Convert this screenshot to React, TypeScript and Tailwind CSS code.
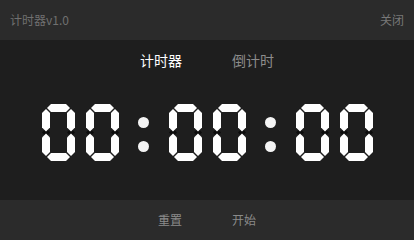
import { useEffect, useState } from 'react';

// 7-segment layout: a top, b top-right, c bottom-right, d bottom, e bottom-left, f top-left, g middle
const SEGMENTS: Record<string, string> = {
  '0': 'abcdef',
  '1': 'bc',
  '2': 'abdeg',
  '3': 'abcdg',
  '4': 'bcfg',
  '5': 'acdfg',
  '6': 'acdefg',
  '7': 'abc',
  '8': 'abcdefg',
  '9': 'abcdfg',
};

const W = 33;
const H = 57;
const T = 8;
const G = 1;

function hSeg(x0: number, x1: number, c: number) {
  const h = T / 2;
  return `${x0},${c} ${x0 + h},${c - h} ${x1 - h},${c - h} ${x1},${c} ${x1 - h},${c + h} ${x0 + h},${c + h}`;
}

function vSeg(y0: number, y1: number, v: number) {
  const h = T / 2;
  return `${v},${y0} ${v + h},${y0 + h} ${v + h},${y1 - h} ${v},${y1} ${v - h},${y1 - h} ${v - h},${y0 + h}`;
}

function diamond(x: number, y: number) {
  const h = T / 2;
  return `${x - h},${y} ${x},${y - h} ${x + h},${y} ${x},${y + h}`;
}

const L = T / 2;
const R = W - T / 2;
const TOP = T / 2;
const MID = H / 2;
const BOT = H - T / 2;

const SHAPES: Record<string, string> = {
  a: hSeg(L + G, R - G, TOP),
  b: vSeg(TOP + G, MID - G, R),
  c: vSeg(MID + G, BOT - G, R),
  d: hSeg(L + G, R - G, BOT),
  e: vSeg(MID + G, BOT - G, L),
  f: vSeg(TOP + G, MID - G, L),
  g: hSeg(L + G, R - G, MID),
};

function Digit({ value }: { value: string }) {
  const lit = SEGMENTS[value] ?? '';
  const order = ['a', 'b', 'c', 'd', 'e', 'f', 'g'];
  return (
    <svg width={W} height={H} viewBox={`0 0 ${W} ${H}`} className="block">
      {/* dark joints where the side segments meet */}
      <polygon points={diamond(L, MID)} fill="#0c0c0c" />
      <polygon points={diamond(R, MID)} fill="#0c0c0c" />
      {order
        .filter((s) => lit.includes(s))
        .map((s) => (
          <polygon key={s} points={SHAPES[s]} fill="#ffffff" />
        ))}
    </svg>
  );
}

function Colon() {
  return (
    <div className="flex h-[57px] w-[50px] flex-col items-center justify-center gap-[13px] pt-[3px]">
      <div className="h-[11px] w-[11px] rounded-full bg-[#f4f4f4]" />
      <div className="h-[11px] w-[11px] rounded-full bg-[#f4f4f4]" />
    </div>
  );
}

function Pair({ value }: { value: number }) {
  const s = String(value).padStart(2, '0');
  return (
    <div className="flex gap-[11px]">
      <Digit value={s[0]} />
      <Digit value={s[1]} />
    </div>
  );
}

export default function App() {
  const [tab, setTab] = useState<'up' | 'down'>('up');
  const [running, setRunning] = useState(false);
  const [seconds, setSeconds] = useState(0);

  useEffect(() => {
    if (!running) return;
    const id = setInterval(() => {
      setSeconds((s) => (tab === 'up' ? s + 1 : Math.max(0, s - 1)));
    }, 1000);
    return () => clearInterval(id);
  }, [running, tab]);

  const hh = Math.floor(seconds / 3600) % 100;
  const mm = Math.floor(seconds / 60) % 60;
  const ss = seconds % 60;

  return (
    <div className="flex h-[240px] w-[414px] flex-col bg-[#1e1e1e] font-['Noto_Sans_CJK_SC',sans-serif] select-none">
      <div className="flex h-[40px] items-center justify-between bg-[#2b2b2b] px-[10px] text-[12px] text-[#707070]">
        <span>计时器v1.0</span>
        <button type="button" className="text-[12px] text-[#787878]">
          关闭
        </button>
      </div>

      <div className="flex h-[160px] flex-col items-center">
        <div className="flex gap-[50px] pt-[10px] text-[14px] leading-[20px]">
          <button
            type="button"
            onClick={() => setTab('up')}
            className={tab === 'up' ? 'text-white' : 'text-[#8c8c8c]'}
          >
            计时器
          </button>
          <button
            type="button"
            onClick={() => setTab('down')}
            className={tab === 'down' ? 'text-white' : 'text-[#8c8c8c]'}
          >
            倒计时
          </button>
        </div>

        <div className="mt-[34px] flex items-start">
          <Pair value={hh} />
          <Colon />
          <Pair value={mm} />
          <Colon />
          <Pair value={ss} />
        </div>
      </div>

      <div className="flex h-[40px] items-center justify-center gap-[50px] bg-[#2b2b2b] text-[12px] text-[#8a8a8a]">
        <button
          type="button"
          onClick={() => {
            setRunning(false);
            setSeconds(0);
          }}
        >
          重置
        </button>
        <button type="button" onClick={() => setRunning((r) => !r)}>
          {running ? '暂停' : '开始'}
        </button>
      </div>
    </div>
  );
}
